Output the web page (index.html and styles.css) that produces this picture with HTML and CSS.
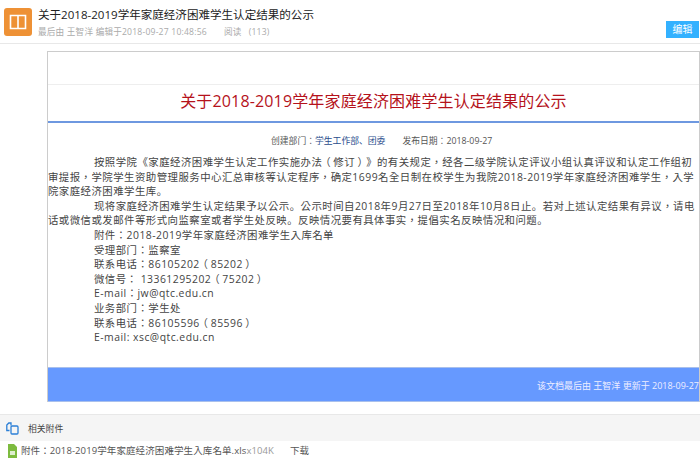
FILE: index.html
```html
<!DOCTYPE html>
<html lang="zh-CN">
<head>
<meta charset="utf-8">
<title>关于2018-2019学年家庭经济困难学生认定结果的公示</title>
<link rel="stylesheet" href="styles.css">
</head>
<body>
<header class="top">
  <div class="logo">
    <svg width="28" height="28" viewBox="0 0 28 28"><rect width="28" height="28" rx="3" fill="#ee9135"/><path d="M6.500 7.500h15v13h-15zM14 7.500v13" fill="none" stroke="#fff" stroke-width="1.600"/></svg>
  </div>
  <div class="top-text">
    <div class="top-title">关于2018-2019学年家庭经济困难学生认定结果的公示</div>
    <div class="top-meta"><span>最后由&nbsp;王智洋&nbsp;编辑于2018-09-27 10:48:56</span><span class="reads">阅读&nbsp;&nbsp;&nbsp;(113)</span></div>
  </div>
  <a class="edit">编辑</a>
</header>
<main class="doc">
  <div class="doc-head"></div>
  <h1 class="doc-title">关于2018-2019学年家庭经济困难学生认定结果的公示</h1>
  <div class="doc-info" lang="zh-TW">创建部门：<span class="dept">学生工作部<span class="stop" lang="zh-CN">、</span>团委</span><span class="date">发布日期：2018-09-27</span></div>
  <div class="doc-body" lang="zh-TW">
    <p class="para">按照学院《家庭经济困难学生认定工作实施办法<span class="paren">（</span>修订<span class="paren">）</span>》的有关规定，经各二级学院认定评议小组认真评议和认定工作组初<br>审提报，学院学生资助管理服务中心汇总审核等认定程序，确定1699名全日制在校学生为我院2018-2019学年家庭经济困难学生，入学<br>院家庭经济困难学生库<span class="stop" lang="zh-CN">。</span></p>
    <p class="para">现将家庭经济困难学生认定结果予以公示<span class="stop" lang="zh-CN">。</span>公示时间自2018年9月27日至2018年10月8日止<span class="stop" lang="zh-CN">。</span>若对上述认定结果有异议，请电<br>话或微信或发邮件等形式向监察室或者学生处反映<span class="stop" lang="zh-CN">。</span>反映情况要有具体事实，提倡实名反映情况和问题<span class="stop" lang="zh-CN">。</span></p>
    <p class="line">附件：2018-2019学年家庭经济困难学生入库名单</p>
    <p class="line">受理部门：监察室</p>
    <p class="line">联系电话：86105202<span class="paren">（</span>85202<span class="paren">）</span></p>
    <p class="line">微信号： 13361295202<span class="paren">（</span>75202<span class="paren">）</span></p>
    <p class="line">E-mail：jw@qtc.edu.cn</p>
    <p class="line">业务部门：学生处</p>
    <p class="line">联系电话：86105596<span class="paren">（</span>85596<span class="paren">）</span></p>
    <p class="line">E-mail: xsc@qtc.edu.cn</p>
  </div>
  <div class="doc-foot">该文档最后由&nbsp;王智洋&nbsp;更新于&nbsp;2018-09-27</div>
</main>
<section class="attach">
  <div class="attach-head">
    <svg width="13" height="13" viewBox="0 0 13 13"><path d="M5 3.500V1h-2.200L.8 3v5.500h2.700" fill="none" stroke="#2b7fd6" stroke-width="1.300"/><rect x="5" y="4" width="7" height="8" rx="1" fill="none" stroke="#2b7fd6" stroke-width="1.300"/></svg>
    <span>相关附件</span>
  </div>
  <div class="attach-row" lang="zh-TW">
    <svg width="9" height="14" viewBox="0 0 9 14"><path d="M0 0h6l3 3v11H0z" fill="#7dbb3f"/><path d="M2 7h5v4H2z" fill="#fff" opacity=".75"/></svg>
    <span class="file">附件：2018-2019学年家庭经济困难学生入库名单.xls</span><span class="size">x104K</span>
    <span class="down">下载</span>
  </div>
</section>
</body>
</html>
```
FILE: styles.css
```css
* { box-sizing: border-box; }
html, body { margin: 0; padding: 0; background: #fff; }
body {
  width: 700px;
  height: 461px;
  overflow: hidden;
  font-family: "Open Sans", "Noto Sans CJK TC", sans-serif;
  color: #444;
}
p, h1 { margin: 0; font-weight: 400; }

.top {
  display: flex;
  height: 44px;
  padding: 8px 1px 0 4px;
  border-bottom: 1px solid #e8e8e8;
}
.logo { width: 28px; height: 28px; }
.logo svg { display: block; }
.top-text { flex: 1; margin-left: 6px; }
.top-title {
  font-family: "Open Sans", "Noto Sans CJK SC", sans-serif;
  font-size: 11.55px;
  line-height: 14px;
  color: #222;
}
.top-meta {
  margin-top: 4px;
  font-size: 8.6px;
  letter-spacing: 0.2px;
  line-height: 12px;
  color: #aaa;
}
.reads { margin-left: 17px; }
.edit {
  width: 33px;
  height: 17px;
  margin-top: 13px;
  background: #33b1ff;
  color: #fff;
  font-size: 10px;
  line-height: 17px;
  text-align: center;
}

.doc {
  height: 351px;
  margin: 7px 0 0 47px;
  border: 1px solid #ccc;
  border-bottom: 0;
  display: flex;
  flex-direction: column;
}
.doc-head { height: 33px; border-bottom: 1px solid #eee; flex: none; }
.doc-title {
  height: 38px;
  border-bottom: 2px solid #6e98e0;
  flex: none;
  font-family: "Open Sans", "Noto Sans CJK SC", sans-serif;
  font-size: 16px;
  letter-spacing: 0.15px;
  line-height: 33px;
  color: #b5121b;
  text-align: center;
}
.doc-info {
  margin-top: 11px;
  padding-left: 223px;
  font-size: 8.8px;
  line-height: 14px;
  color: #555;
}
.dept { color: #2a4c8c; }
.date { margin-left: 17px; }
.doc-body {
  flex: 1;
  margin-top: 7px;
  font-size: 10.4px;
  letter-spacing: 0.48px;
  line-height: 14.6px;
  white-space: nowrap;
}
.stop { font-family: "Noto Sans CJK SC", sans-serif; }
.paren {
  display: inline-block;
  margin: 0 2.7px;
  text-indent: 0;
  font-feature-settings: "palt";
}
.para { text-indent: 46px; }
.line { padding-left: 46px; }
.doc-foot {
  height: 35px;
  background: #6699ff;
  border-top: 1px solid #a9c0ec;
  border-bottom: 1px solid #a9c0ec;
  color: #eef;
  font-size: 9px;
  line-height: 35px;
  text-align: right;
  white-space: nowrap;
}

.attach { margin-top: 12px; border-top: 1px solid #e8e8e8; }
.attach-head {
  display: flex;
  align-items: center;
  height: 26px;
  padding-left: 6px;
  background: #f5f5f5;
  color: #444;
  font-size: 8.8px;
}
.attach-head span { margin-left: 9px; }
.attach-row {
  display: flex;
  align-items: center;
  padding: 3px 0 0 8px;
  font-size: 9.5px;
  letter-spacing: 0.1px;
  line-height: 14px;
  white-space: nowrap;
}
.file { margin-left: 4px; color: #555; }
.size { color: #999; }
.down { margin-left: 16px; color: #555; }
```
